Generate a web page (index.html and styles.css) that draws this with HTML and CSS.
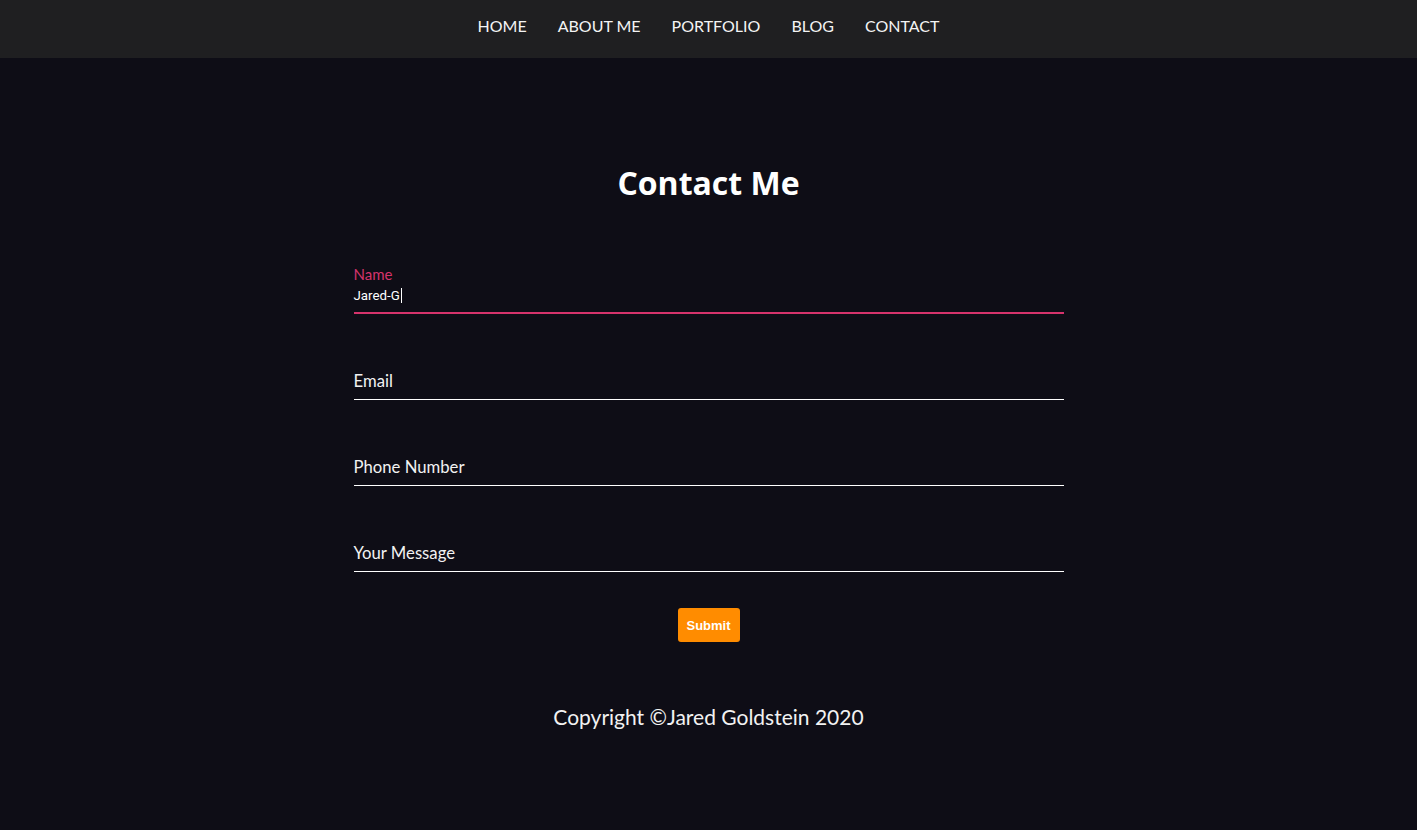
FILE: index.html
```html
<!DOCTYPE html>
<html lang="en">
<head>
<meta charset="utf-8">
<title>Contact Me</title>
<link rel="stylesheet" href="styles.css">
</head>
<body>
<nav class="nav">
  <a class="nav-link" href="#">HOME</a>
  <a class="nav-link" href="#">ABOUT ME</a>
  <a class="nav-link" href="#">PORTFOLIO</a>
  <a class="nav-link" href="#">BLOG</a>
  <a class="nav-link" href="#">CONTACT</a>
</nav>
<main class="main">
  <h1 class="title">Contact Me</h1>
  <form class="form">
    <div class="field">
      <div class="field-label field-label--active">Name</div>
      <div class="field-row field-row--active"><span class="field-value">Jared-G</span><span class="caret"></span></div>
    </div>
    <div class="field">
      <div class="field-label"></div>
      <div class="field-row"><span class="field-placeholder">Email</span></div>
    </div>
    <div class="field">
      <div class="field-label"></div>
      <div class="field-row"><span class="field-placeholder">Phone Number</span></div>
    </div>
    <div class="field">
      <div class="field-label"></div>
      <div class="field-row"><span class="field-placeholder">Your Message</span></div>
    </div>
    <button class="submit" type="button">Submit</button>
  </form>
  <footer class="footer">Copyright ©Jared Goldstein 2020</footer>
</main>
</body>
</html>
```
FILE: styles.css
```css
html, body {
  margin: 0;
  padding: 0;
  background: #0e0d16;
  color: #f2f2f2;
  font-family: "Lato", "Noto Sans", sans-serif;
}

.nav {
  height: 58px;
  box-sizing: border-box;
  padding-bottom: 6px;
  background: #1f1f21;
  display: flex;
  justify-content: center;
  align-items: center;
  gap: 31px;
}

.nav-link {
  color: #f4f4f4;
  text-decoration: none;
  font-size: 16px;
  line-height: 20px;
}

.main {
  display: flex;
  flex-direction: column;
  align-items: center;
  padding-top: 105px;
  min-height: calc(830px - 58px - 105px);
}

.title {
  margin: 0;
  font-family: "Open Sans", "Noto Sans", sans-serif;
  font-weight: 700;
  font-size: 32px;
  line-height: 40px;
  color: #ffffff;
}

.form {
  margin-top: 63px;
  width: 710px;
  display: flex;
  flex-direction: column;
  align-items: center;
  gap: 38px;
}

.field {
  width: 100%;
  height: 48px;
  display: flex;
  flex-direction: column;
}

.field-label {
  height: 16px;
  font-size: 15px;
  line-height: 16px;
}

.field-label--active {
  color: #d6336c;
}

.field-row {
  flex: 1;
  display: flex;
  align-items: flex-end;
  border-bottom: 1px solid #ffffff;
  padding-bottom: 9px;
}

.field-row--active {
  border-bottom: 2px solid #d6336c;
  padding-bottom: 9px;
}

.field-value {
  font-family: "Roboto", "Liberation Sans", sans-serif;
  font-size: 13.3px;
  line-height: 15px;
  color: #ffffff;
}

.caret {
  display: inline-block;
  width: 1px;
  height: 15px;
  background: #ffffff;
  margin-left: 1px;
}

.field-placeholder {
  font-size: 16.7px;
  line-height: 18px;
  color: #f2f2f2;
}

.submit {
  margin-top: -2px;
  width: 62px;
  height: 34px;
  border: none;
  border-radius: 3px;
  background: #ff8c00;
  color: #ffffff;
  font-family: "Liberation Sans", Arial, sans-serif;
  font-weight: 700;
  font-size: 13px;
  padding: 0;
}

.footer {
  margin-top: 63px;
  font-size: 21px;
  line-height: 24px;
  color: #f2f2f2;
}
```
